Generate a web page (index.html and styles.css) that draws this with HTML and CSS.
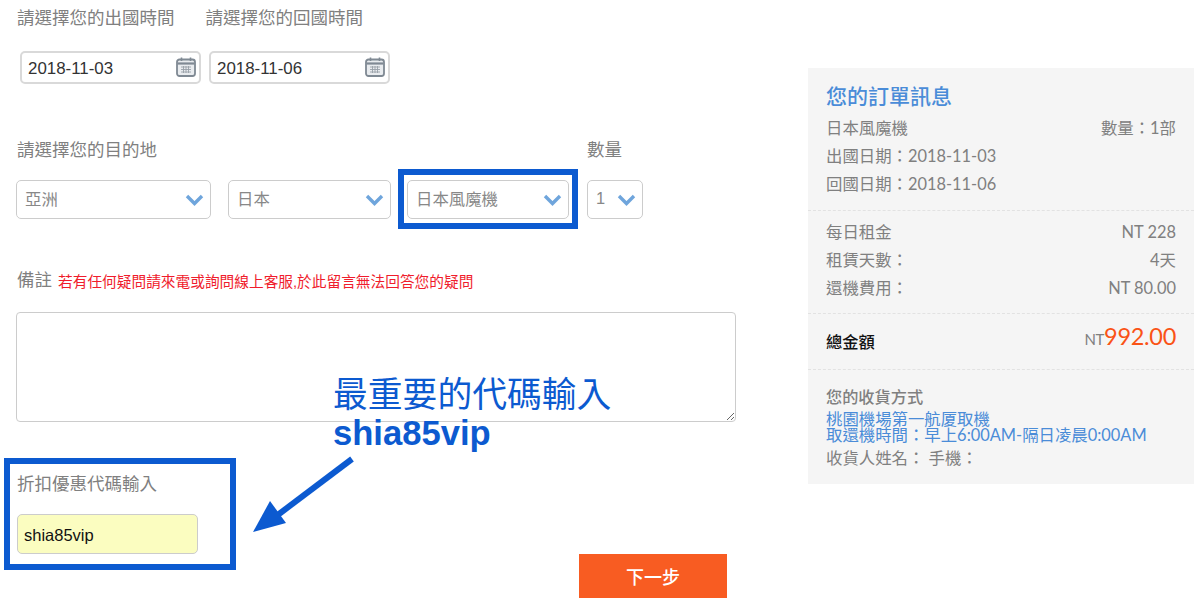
FILE: index.html
```html
<!DOCTYPE html>
<html lang="zh-Hant">
<head>
  <meta charset="UTF-8">
  <title>訂單資料</title>
  <link rel="stylesheet" href="styles.css">
</head>
<body>
  <div class="container">
    <form class="order-form">
      <div class="date-labels">
        <label>請選擇您的出國時間</label>
        <label>請選擇您的回國時間</label>
      </div>
      <div class="date-row">
        <div class="date-field">
          <input type="text" value="2018-11-03">
          <svg class="calendar" viewBox="0 0 20 20"><use href="#cal"/></svg>
        </div>
        <div class="date-field">
          <input type="text" value="2018-11-06">
          <svg class="calendar" viewBox="0 0 20 20"><use href="#cal"/></svg>
        </div>
      </div>

      <div class="dest-labels">
        <label>請選擇您的目的地</label>
        <label>數量</label>
      </div>
      <div class="select-row">
        <div class="select-box region"><span>亞洲</span><svg class="chevron" viewBox="0 0 19 12"><path d="M2 2l7.5 7.5L17 2"/></svg></div>
        <div class="select-box country"><span>日本</span><svg class="chevron" viewBox="0 0 19 12"><path d="M2 2l7.5 7.5L17 2"/></svg></div>
        <div class="select-box product"><span>日本風魔機</span><svg class="chevron" viewBox="0 0 19 12"><path d="M2 2l7.5 7.5L17 2"/></svg></div>
        <div class="select-box qty"><span>1</span><svg class="chevron" viewBox="0 0 19 12"><path d="M2 2l7.5 7.5L17 2"/></svg></div>
      </div>

      <div class="note-label">
        <label>備註</label>
        <span class="note-warning">若有任何疑問請來電或詢問線上客服,於此留言無法回答您的疑問</span>
      </div>
      <textarea class="note-input"></textarea>

      <label class="code-label">折扣優惠代碼輸入</label>
      <div class="form-bottom">
        <input class="code-input" type="text" value="shia85vip">
        <button class="next-button" type="button">下一步</button>
      </div>
    </form>

    <aside class="summary">
      <div class="summary-section top">
        <h2>您的訂單訊息</h2>
        <div class="row"><span>日本風魔機</span><span>數量：1部</span></div>
        <div class="row"><span>出國日期：2018-11-03</span></div>
        <div class="row"><span>回國日期：2018-11-06</span></div>
      </div>
      <div class="summary-section fees">
        <div class="row"><span>每日租金</span><span>NT 228</span></div>
        <div class="row"><span>租賃天數：</span><span>4天</span></div>
        <div class="row"><span>還機費用：</span><span>NT 80.00</span></div>
      </div>
      <div class="summary-section total">
        <strong>總金額</strong>
        <span class="price"><small>NT</small>992.00</span>
      </div>
      <div class="summary-section delivery">
        <h3>您的收貨方式</h3>
        <p class="place">桃園機場第一航厦取機<br>取還機時間：早上6:00AM-隔日凌晨0:00AM</p>
        <p class="receiver">收貨人姓名： 手機：</p>
      </div>
    </aside>
  </div>

  <!-- annotations drawn over the form -->
  <div class="mark mark-product"></div>
  <div class="mark mark-code"></div>
  <div class="callout">最重要的代碼輸入<br><b>shia85vip</b></div>
  <svg class="arrow" viewBox="0 0 110 85"><path d="M101 3L24 61" class="arrow-line"/><path d="M2 76L19 45 35 67z" class="arrow-head"/></svg>

  <svg class="defs" width="0" height="0">
    <symbol id="cal" viewBox="0 0 20 20">
      <rect x="1" y="2.5" width="18" height="16.5" rx="2.5" fill="#e9ecef" stroke="#7f8993" stroke-width="1.8"/>
      <path d="M1.5 6.5h17" stroke="#7f8993" stroke-width="2.2"/>
      <path d="M5.5 .5v3.5M14.5 .5v3.5" stroke="#7f8993" stroke-width="1.6"/>
      <path d="M5 10h10M5 12.5h10M5 15h10M7.5 9v7M10 9v7M12.5 9v7" stroke="#98a0a8" stroke-width=".9"/>
    </symbol>
  </svg>
</body>
</html>
```

FILE: styles.css
```css
* {
  box-sizing: border-box;
}
html, body {
  margin: 0;
  height: 606px;
  overflow: hidden;
}
body {
  position: relative;
  background: #fff;
  color: #808080;
  font-family: "Liberation Sans", "Noto Sans CJK TC", sans-serif;
}
label {
  display: block;
  font-size: 17.5px;
  line-height: 24px;
  color: #808080;
}
.container {
  display: flex;
  align-items: flex-start;
}
.order-form {
  width: 808px;
  padding: 6px 0 0 17px;
}
.date-labels {
  display: flex;
  gap: 31px;
}
.date-row {
  display: flex;
  gap: 8px;
  margin: 21px 0 0 3px;
}
.date-field {
  position: relative;
  width: 181px;
  height: 33px;
  border: 2px solid #d9d9d9;
  border-radius: 5px;
}
.date-field input {
  width: 100%;
  height: 100%;
  padding: 2px 6px 0;
  border: none;
  background: none;
  font: 16.9px "Liberation Sans", sans-serif;
  color: #333;
}
.calendar {
  position: absolute;
  right: 3px;
  top: 4px;
  width: 20px;
  height: 20px;
}
.dest-labels {
  display: flex;
  justify-content: space-between;
  width: 605px;
  margin-top: 54px;
}
.select-row {
  display: flex;
  margin: 18px 0 0 -1px;
}
.select-box {
  display: flex;
  align-items: center;
  justify-content: space-between;
  height: 39px;
  padding: 0 6px 0 8px;
  border: 1px solid #ccc;
  border-radius: 5px;
  font-size: 16.4px;
  color: #888;
}
.select-box span {
  margin-bottom: 3px;
}
.region {
  width: 195px;
  margin-right: 17px;
}
.country {
  width: 163px;
  margin-right: 16px;
}
.product {
  width: 162px;
  margin-right: 18px;
}
.qty {
  width: 56px;
}
.chevron {
  width: 19px;
  height: 12px;
  flex: none;
}
.chevron path {
  fill: none;
  stroke: #6fa5dc;
  stroke-width: 3.4;
}
.note-label {
  display: flex;
  align-items: center;
  gap: 6px;
  margin-top: 49px;
}
.note-warning {
  font-size: 14.7px;
  color: #f01c2c;
}
.note-input {
  display: block;
  width: 720px;
  height: 110px;
  margin: 20px 0 0 -1px;
  border: 1px solid #ccc;
  border-radius: 4px;
  outline: none;
}
.code-label {
  margin-top: 50px;
}
.form-bottom {
  display: flex;
  align-items: flex-start;
  justify-content: space-between;
  width: 710px;
  margin-top: 18px;
}
.code-input {
  width: 181px;
  height: 40px;
  padding: 2px 6px 0;
  border: 1px solid #ccc;
  border-radius: 5px;
  background: #fbfdc0;
  font: 16.5px "Liberation Sans", sans-serif;
  color: #111;
}
.next-button {
  width: 148px;
  height: 44px;
  margin-top: 40px;
  border: none;
  background: #f85c22;
  color: #fff;
  font: 500 18px "Noto Sans CJK TC", sans-serif;
}
.summary {
  width: 386px;
  height: 416px;
  margin-top: 68px;
  background: #f5f5f5;
  font-family: "Lato", "Noto Sans CJK TC", sans-serif;
  font-size: 16.4px;
  color: #808080;
}
.summary-section {
  padding: 0 18px;
  border-bottom: 1px dashed #e2e2e2;
}
.summary h2 {
  margin: 0 0 3px;
  font-size: 21px;
  font-weight: 500;
  line-height: 30px;
  color: #4a8cd8;
}
.row {
  display: flex;
  justify-content: space-between;
  height: 28px;
  line-height: 28px;
}
.top {
  height: 143px;
  padding-top: 13px;
}
.fees {
  height: 103px;
  padding-top: 7px;
}
.total {
  display: flex;
  align-items: center;
  justify-content: space-between;
  height: 56px;
}
.total strong {
  color: #111;
  font-size: 16.3px;
  font-weight: 500;
  margin-top: -2px;
}
.price {
  margin-top: -12px;
  font-size: 23.5px;
  letter-spacing: -.3px;
  color: #fa5316;
}
.price small {
  font-size: 15px;
  color: #808080;
}
.delivery {
  border: none;
  padding-top: 17px;
}
.delivery h3 {
  margin: 0;
  font-size: 16.2px;
  font-weight: 500;
  line-height: 20px;
}
.delivery p {
  margin: 0;
}
.place {
  color: #4a8cd8;
  line-height: 16px;
  margin-top: 4px !important;
}
.receiver {
  line-height: 22px;
  margin-top: 4px !important;
}
.mark {
  position: absolute;
  border: 6px solid #0c5ad0;
}
.mark-product {
  left: 398px;
  top: 169px;
  width: 180px;
  height: 60px;
}
.mark-code {
  left: 4px;
  top: 458px;
  width: 232px;
  height: 112px;
}
.callout {
  position: absolute;
  left: 333px;
  top: 376px;
  font-size: 34.8px;
  line-height: 38px;
  color: #0c5ad0;
  white-space: nowrap;
}
.callout b {
  font-size: 34.6px;
}
.arrow {
  position: absolute;
  left: 251px;
  top: 456px;
  width: 110px;
  height: 85px;
}
.arrow-line {
  fill: none;
  stroke: #0c5ad0;
  stroke-width: 6;
}
.arrow-head {
  fill: #0c5ad0;
}
.defs {
  position: absolute;
}
```
